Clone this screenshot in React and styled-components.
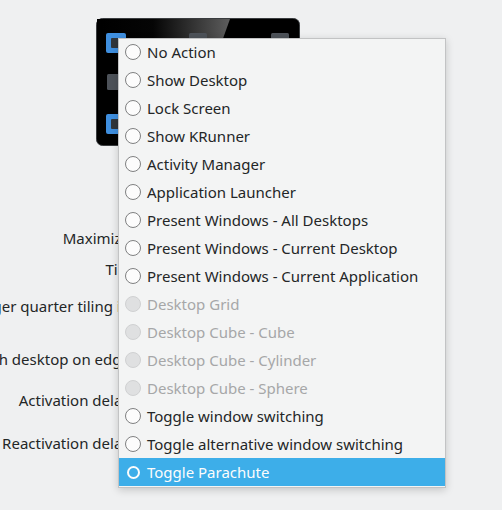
import React from "react";
import styled, { createGlobalStyle } from "styled-components";

const Global = createGlobalStyle`
  html, body { margin: 0; padding: 0; }
  body {
    background: #eff0f1;
    font-family: "Noto Sans", "DejaVu Sans", sans-serif;
    font-size: 15px;
    color: #232627;
    width: 502px;
    height: 510px;
    overflow: hidden;
  }
`;

const Page = styled.div`
  position: relative;
  width: 502px;
  height: 510px;
  padding-top: 18px;
  box-sizing: border-box;
`;

const MonitorWrap = styled.div`
  margin-left: 96px;
  width: 204px;
  height: 128px;
`;

const Form = styled.div`
  display: flex;
  flex-direction: column;
  margin-top: 77px;
`;

const Row = styled.div`
  display: flex;
  align-items: center;
  height: ${(p) => p.$h}px;
  margin-top: ${(p) => p.$mt}px;
`;

const Label = styled.div`
  width: 134px;
  display: flex;
  justify-content: flex-end;
  white-space: nowrap;
  color: #232627;
`;

const Menu = styled.div`
  position: absolute;
  left: 118px;
  top: 38px;
  width: 326px;
  background: #f3f4f4;
  border: 1px solid #c2c3c4;
  box-shadow: 0 2px 8px rgba(0, 0, 0, 0.18);
  display: flex;
  flex-direction: column;
  padding-bottom: 1px;
`;

const Item = styled.div`
  display: flex;
  align-items: center;
  height: 28px;
  margin-top: ${(p) => (p.$first ? "-1px" : "0")};
  padding-left: 6px;
  gap: 6px;
  background: ${(p) => (p.$active ? "#3daee9" : "transparent")};
  color: ${(p) => (p.$active ? "#fcfcfc" : p.$disabled ? "#a6a7a8" : "#232627")};
  white-space: nowrap;
`;

const Radio = styled.span`
  box-sizing: border-box;
  width: 16px;
  height: 16px;
  border-radius: 50%;
  flex: none;
  display: flex;
  align-items: center;
  justify-content: center;
  border: 1px solid ${(p) => (p.$disabled ? "#d0d1d2" : "#7f8081")};
  background: ${(p) => (p.$disabled ? "#dfe0e1" : "#fcfcfc")};
  ${(p) =>
    p.$active &&
    `
    border: none;
    background: transparent;
  `}
`;

const ActiveRing = styled.span`
  box-sizing: border-box;
  width: 13px;
  height: 13px;
  border-radius: 50%;
  border: 2px solid #fcfcfc;
`;

function Monitor() {
  return (
    <svg width="204" height="128" viewBox="0 0 204 128">
      <defs>
        <linearGradient id="gloss" x1="0" y1="0" x2="1" y2="0">
          <stop offset="0" stopColor="#000" />
          <stop offset="0.4" stopColor="#050505" />
          <stop offset="1" stopColor="#5d5d5d" />
        </linearGradient>
      </defs>
      <rect x="0.5" y="0.5" width="203" height="127" rx="6" fill="#000" stroke="#3a3d40" />
      <path d="M6 1 L134 1 L120 40 L6 40 Z" fill="url(#gloss)" />
      <rect x="1" y="1" width="5" height="40" fill="#000" />
      <rect x="10" y="15" width="20" height="20" rx="2" fill="#3f8fdf" />
      <rect x="15" y="20" width="10" height="10" rx="1" fill="#31363b" />
      <rect x="93" y="15" width="18" height="18" rx="1.5" fill="#4d5259" />
      <rect x="175" y="15" width="18" height="18" rx="1.5" fill="#4d5259" />
      <rect x="11" y="56" width="16" height="16" rx="1.5" fill="#4d5259" />
      <rect x="10" y="96" width="20" height="20" rx="2" fill="#3f8fdf" />
      <rect x="15" y="101" width="10" height="10" rx="1" fill="#31363b" />
    </svg>
  );
}

const labels = [
  { t: "Maximize:", h: 30, mt: 0 },
  { t: "Tile:", h: 30, mt: 1 },
  { t: "Trigger quarter tiling in:", h: 34, mt: 5 },
  { t: "Switch desktop on edge:", h: 34, mt: 19 },
  { t: "Activation delay:", h: 34, mt: 7 },
  { t: "Reactivation delay:", h: 34, mt: 9 },
];

const items = [
  { t: "No Action" },
  { t: "Show Desktop" },
  { t: "Lock Screen" },
  { t: "Show KRunner" },
  { t: "Activity Manager" },
  { t: "Application Launcher" },
  { t: "Present Windows - All Desktops" },
  { t: "Present Windows - Current Desktop" },
  { t: "Present Windows - Current Application" },
  { t: "Desktop Grid", d: true },
  { t: "Desktop Cube - Cube", d: true },
  { t: "Desktop Cube - Cylinder", d: true },
  { t: "Desktop Cube - Sphere", d: true },
  { t: "Toggle window switching" },
  { t: "Toggle alternative window switching" },
  { t: "Toggle Parachute", a: true },
];

export default function App() {
  return (
    <Page>
      <Global />
      <MonitorWrap>
        <Monitor />
      </MonitorWrap>
      <Form>
        {labels.map((l) => (
          <Row key={l.t} $h={l.h} $mt={l.mt}>
            <Label>{l.t}</Label>
          </Row>
        ))}
      </Form>
      <Menu>
        {items.map((it, i) => (
          <Item key={it.t} $first={i === 0} $disabled={it.d} $active={it.a}>
            <Radio $disabled={it.d} $active={it.a}>
              {it.a && <ActiveRing />}
            </Radio>
            <span>{it.t}</span>
          </Item>
        ))}
      </Menu>
    </Page>
  );
}
